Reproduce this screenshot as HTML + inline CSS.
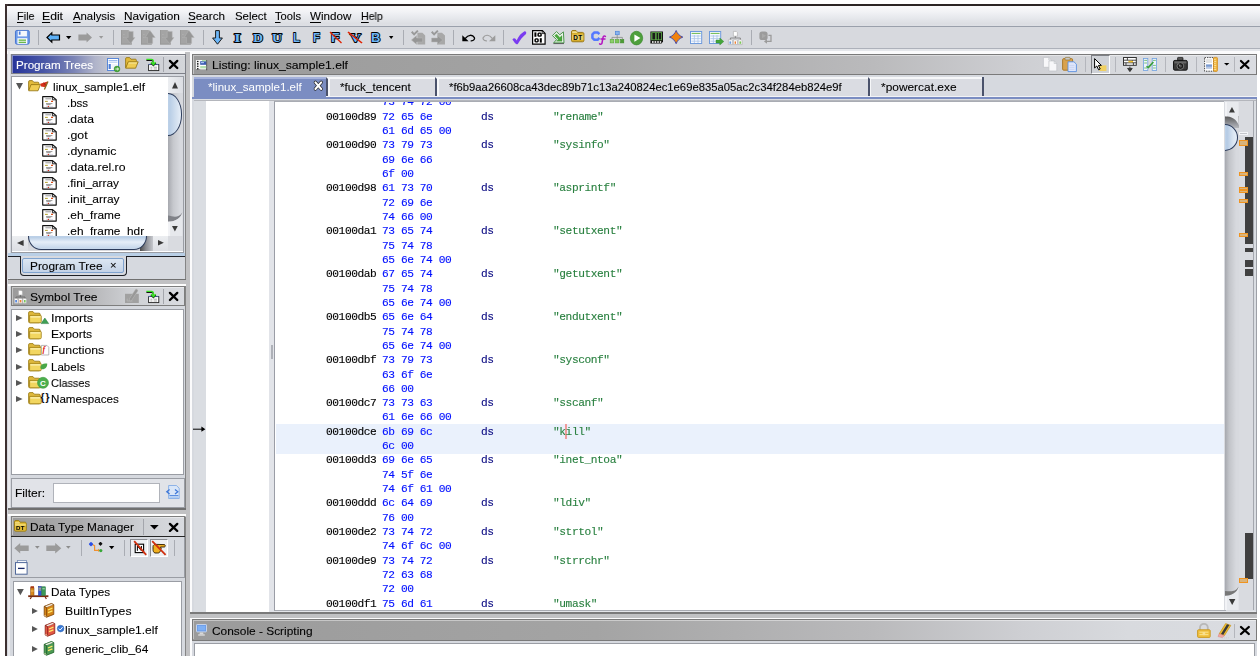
<!DOCTYPE html>
<html><head><meta charset="utf-8">
<style>
*{box-sizing:border-box;margin:0;padding:0}
html,body{width:1260px;height:656px;overflow:hidden;background:#fff}
body{position:relative;font-family:"Liberation Sans",sans-serif;font-size:11px;color:#000}
.t,.m,i,svg{position:absolute;display:block}
.t{white-space:nowrap;line-height:14px;height:14px;transform-origin:0 50%;font-style:normal}
.m{font-family:"Liberation Mono",monospace;font-size:11.2px;letter-spacing:-.421px;line-height:14px;height:14px;white-space:pre}
.a{color:#000}.b{color:#0010ff}.d{color:#0a0a82}.s{color:#2a8040}
u{text-decoration:underline;text-underline-offset:1.5px;text-decoration-thickness:1px}
svg{overflow:visible}
.t,.m{will-change:transform}
.m{-webkit-text-stroke:.13px currentColor}
.t{-webkit-text-stroke:.1px currentColor}
</style></head><body>
<i style="left:5px;top:4px;width:1255px;height:2px;background:#2b2424;"></i>
<i style="left:5px;top:4px;width:3.1px;height:652px;background:#3c3030;"></i>
<i style="left:7px;top:6px;width:1253px;height:650px;background:#d6d9df;"></i>
<i style="left:7px;top:6px;width:1253px;height:20px;background:linear-gradient(#fafafb,#f1f2f5 30%,#e6e8ec 60%,#dcdee3 88%,#dddfe4);"></i>
<i style="left:7px;top:26px;width:1253px;height:1px;background:#9aa0ab;"></i>
<i style="left:7px;top:27px;width:1253px;height:21px;background:#d7d9de;"></i>
<i style="left:7px;top:48px;width:1253px;height:1px;background:#adb1ba;"></i>
<i style="left:7px;top:49px;width:1253px;height:2.4px;background:#e4e6ea;"></i>
<i style="left:7px;top:51.4px;width:1250px;height:2.8px;background:#fbfbfc;"></i>
<span class="t" style="left:16.80px;top:9.00px;font-size:11px;color:#000;transform:scaleX(0.9874);"><u>F</u>ile</span>
<span class="t" style="left:42.30px;top:9.00px;font-size:11px;color:#000;transform:scaleX(1.1079);"><u>E</u>dit</span>
<span class="t" style="left:72.60px;top:9.00px;font-size:11px;color:#000;transform:scaleX(1.0303);"><u>A</u>nalysis</span>
<span class="t" style="left:123.50px;top:9.00px;font-size:11px;color:#000;transform:scaleX(1.0736);"><u>N</u>avigation</span>
<span class="t" style="left:188.30px;top:9.00px;font-size:11px;color:#000;transform:scaleX(1.0616);"><u>S</u>earch</span>
<span class="t" style="left:234.60px;top:9.00px;font-size:11px;color:#000;transform:scaleX(1.0369);">Se<u>l</u>ect</span>
<span class="t" style="left:275.30px;top:9.00px;font-size:11px;color:#000;transform:scaleX(1.0125);"><u>T</u>ools</span>
<span class="t" style="left:310.00px;top:9.00px;font-size:11px;color:#000;transform:scaleX(1.0557);"><u>W</u>indow</span>
<span class="t" style="left:361.00px;top:9.00px;font-size:11px;color:#000;transform:scaleX(0.9637);"><u>H</u>elp</span>
<svg style="left:15.10px;top:30.20px" width="14.70" height="14.60" viewBox="0 0 16 16" preserveAspectRatio="none" ><rect x=".5" y=".5" width="15" height="15" rx="1.5" fill="#6f9cea" stroke="#4070cc"/>
<rect x="3" y="1" width="10" height="6" fill="#f4f7fc"/><rect x="4.2" y="1.6" width="1.8" height="3.6" fill="#4a7ad8"/>
<rect x="2.6" y="9" width="10.8" height="6.2" fill="#fbfcfe"/><rect x="4" y="10.4" width="8" height="1.5" fill="#6cb84a"/><rect x="4" y="12.8" width="8" height="1.5" fill="#6cb84a"/></svg>
<i style="left:37.9px;top:30px;width:1px;height:15px;background:#a9acb3;"></i>
<svg style="left:45.90px;top:32.00px" width="14.20" height="11.00" viewBox="0 0 14.2 11" preserveAspectRatio="none" ><path d="M1 5.5L5.8 .9V3H13.5V8H5.8V10.1Z" fill="#5db0f6" stroke="#000" stroke-width="1.2" stroke-linejoin="miter"/></svg>
<svg style="left:65.90px;top:36.00px" width="5.40" height="3.20" viewBox="0 0 10 6" preserveAspectRatio="none" ><path d="M0 0H10L5 6Z" fill="#000"/></svg>
<svg style="left:77.80px;top:32.00px" width="14.20" height="11.00" viewBox="0 0 14.2 11" preserveAspectRatio="none" ><path d="M14 5.5L8.6 .4V2.6H.4V8.4H8.6V10.6Z" fill="#9b9b9b"/></svg>
<svg style="left:98.80px;top:36.00px" width="4.30" height="2.80" viewBox="0 0 10 6" preserveAspectRatio="none" ><path d="M0 0H10L5 6Z" fill="#9a9a9a"/></svg>
<i style="left:112.9px;top:30px;width:1px;height:15px;background:#a9acb3;"></i>
<svg style="left:120.90px;top:30.20px" width="14.60" height="14.60" viewBox="0 0 14.6 14.6" preserveAspectRatio="none" ><path d="M0 0H7.4L10.8 3V14.6H0Z" fill="#a4a4a4"/><path d="M0 0H.9V14.6H0ZM0 13.6H10.8V14.6H0Z" fill="#999"/><path d="M2 4.6H4M2 7.4H4" stroke="#b4b4b4" stroke-width=".7" stroke-dasharray=".8 .6"/><path d="M7.2 1.4H12.2V7.6H13.9L9.6 13.5L4.6 7.6H7.2Z" fill="#979797" stroke="#b6b6b6" stroke-width=".5"/></svg>
<svg style="left:140.90px;top:30.20px" width="14.60" height="14.60" viewBox="0 0 14.6 14.6" preserveAspectRatio="none" ><path d="M0 0H7.4L10.8 3V14.6H0Z" fill="#a4a4a4"/><path d="M0 0H.9V14.6H0ZM0 13.6H10.8V14.6H0Z" fill="#999"/><path d="M2 4.6H4M2 7.4H4" stroke="#b4b4b4" stroke-width=".7" stroke-dasharray=".8 .6"/><path d="M8.8 .3L14.2 7.4H11.6V13.4H6.6V7.4H4.2Z" fill="#979797" stroke="#b6b6b6" stroke-width=".5"/></svg>
<svg style="left:160.00px;top:30.20px" width="14.60" height="14.60" viewBox="0 0 14.6 14.6" preserveAspectRatio="none" ><path d="M0 0H7.4L10.8 3V14.6H0Z" fill="#a4a4a4"/><path d="M0 0H.9V14.6H0ZM0 13.6H10.8V14.6H0Z" fill="#999"/><path d="M2 4.6H4M2 7.4H4" stroke="#b4b4b4" stroke-width=".7" stroke-dasharray=".8 .6"/><path d="M7.2 1.4H12.2V7.6H13.9L9.6 13.5L4.6 7.6H7.2Z" fill="#979797" stroke="#b6b6b6" stroke-width=".5"/></svg>
<svg style="left:180.00px;top:30.20px" width="14.60" height="14.60" viewBox="0 0 14.6 14.6" preserveAspectRatio="none" ><path d="M0 0H7.4L10.8 3V14.6H0Z" fill="#a4a4a4"/><path d="M0 0H.9V14.6H0ZM0 13.6H10.8V14.6H0Z" fill="#999"/><path d="M2 4.6H4M2 7.4H4" stroke="#b4b4b4" stroke-width=".7" stroke-dasharray=".8 .6"/><path d="M8.8 .3L14.2 7.4H11.6V13.4H6.6V7.4H4.2Z" fill="#979797" stroke="#b6b6b6" stroke-width=".5"/></svg>
<i style="left:202.9px;top:30px;width:1px;height:15px;background:#a9acb3;"></i>
<svg style="left:212.00px;top:30.20px" width="11.00" height="14.80" viewBox="0 0 11 14.8" preserveAspectRatio="none" ><path d="M3.6 .6H7.4V8H10.4L5.5 14.2L.6 8H3.6Z" fill="#6cb6f8" stroke="#1a1a1a" stroke-width="1"/></svg>
<svg style="left:233.00px;top:31.20px" width="8.80" height="12.40" viewBox="0 0 8.8 12.4" preserveAspectRatio="none" ><text x="4.4" y="10.9" text-anchor="middle" font-family="Liberation Serif" font-weight="bold" font-size="13.5" fill="#6cb6f8" stroke="#000" stroke-width="1.8" stroke-linejoin="round" paint-order="stroke" textLength="6.800000000000001" lengthAdjust="spacingAndGlyphs">I</text></svg>
<svg style="left:251.50px;top:31.20px" width="12.00" height="12.40" viewBox="0 0 12 12.4" preserveAspectRatio="none" ><text x="6.0" y="10.9" text-anchor="middle" font-family="Liberation Serif" font-weight="bold" font-size="13.5" fill="#6cb6f8" stroke="#000" stroke-width="1.8" stroke-linejoin="round" paint-order="stroke" textLength="10" lengthAdjust="spacingAndGlyphs">D</text></svg>
<svg style="left:270.60px;top:31.20px" width="12.00" height="12.40" viewBox="0 0 12 12.4" preserveAspectRatio="none" ><text x="6.0" y="10.9" text-anchor="middle" font-family="Liberation Serif" font-weight="bold" font-size="13.5" fill="#6cb6f8" stroke="#000" stroke-width="1.8" stroke-linejoin="round" paint-order="stroke" textLength="10" lengthAdjust="spacingAndGlyphs">U</text></svg>
<svg style="left:292.20px;top:31.20px" width="9.00" height="12.40" viewBox="0 0 9 12.4" preserveAspectRatio="none" ><text x="4.5" y="10.9" text-anchor="middle" font-family="Liberation Sans" font-weight="bold" font-size="13.5" fill="#6cb6f8" stroke="#000" stroke-width="1.8" stroke-linejoin="round" paint-order="stroke" textLength="7" lengthAdjust="spacingAndGlyphs">L</text></svg>
<svg style="left:312.00px;top:31.20px" width="9.00" height="12.40" viewBox="0 0 9 12.4" preserveAspectRatio="none" ><text x="4.5" y="10.9" text-anchor="middle" font-family="Liberation Sans" font-weight="bold" font-size="13.5" fill="#6cb6f8" stroke="#000" stroke-width="1.8" stroke-linejoin="round" paint-order="stroke" textLength="7" lengthAdjust="spacingAndGlyphs">F</text></svg>
<svg style="left:330.40px;top:31.20px" width="10.50" height="12.40" viewBox="0 0 10.5 12.4" preserveAspectRatio="none" ><text x="5.25" y="10.9" text-anchor="middle" font-family="Liberation Sans" font-weight="bold" font-size="13.5" fill="#6cb6f8" stroke="#000" stroke-width="1.8" stroke-linejoin="round" paint-order="stroke" textLength="8.5" lengthAdjust="spacingAndGlyphs">F</text></svg>
<svg style="left:329.90px;top:32.00px" width="11.50" height="11.00" viewBox="0 0 10 10" preserveAspectRatio="none" ><path d="M0 0L10 10" stroke="#e02000" stroke-width="1.1"/></svg>
<svg style="left:348.60px;top:31.20px" width="13.00" height="12.40" viewBox="0 0 13 12.4" preserveAspectRatio="none" ><text x="6.5" y="10.9" text-anchor="middle" font-family="Liberation Serif" font-weight="bold" font-size="13.5" fill="#6cb6f8" stroke="#000" stroke-width="1.8" stroke-linejoin="round" paint-order="stroke" textLength="11" lengthAdjust="spacingAndGlyphs">V</text></svg>
<svg style="left:348.10px;top:32.00px" width="14.00" height="11.00" viewBox="0 0 10 10" preserveAspectRatio="none" ><path d="M0 0L10 10" stroke="#e02000" stroke-width="1.1"/></svg>
<svg style="left:370.40px;top:31.20px" width="11.40" height="12.40" viewBox="0 0 11.4 12.4" preserveAspectRatio="none" ><text x="5.7" y="10.9" text-anchor="middle" font-family="Liberation Sans" font-weight="bold" font-size="13.5" fill="#6cb6f8" stroke="#000" stroke-width="1.8" stroke-linejoin="round" paint-order="stroke" textLength="9.4" lengthAdjust="spacingAndGlyphs">B</text></svg>
<svg style="left:388.75px;top:36.00px" width="4.40" height="3.00" viewBox="0 0 10 6" preserveAspectRatio="none" ><path d="M0 0H10L5 6Z" fill="#000"/></svg>
<i style="left:403.0px;top:30px;width:1px;height:15px;background:#a9acb3;"></i>
<svg style="left:411.25px;top:30.20px" width="14.20" height="14.60" viewBox="0 0 14.2 14.6" preserveAspectRatio="none" ><path d="M6.4 2.8H11.4L14.2 5.4V14.6H6.4Z" fill="#a8a8a8"/><path d="M0 2.4L1.5 1L3.1 3L6.2 0L7.6 1.2L3.1 5.8Z" fill="#999"/><path d="M.4 10L5.6 5.6V8H11.6V12H5.6V14.4Z" fill="#969696" stroke="#b8b8b8" stroke-width=".5"/></svg>
<svg style="left:431.25px;top:30.20px" width="14.20" height="14.60" viewBox="0 0 14.2 14.6" preserveAspectRatio="none" ><path d="M6.4 2.8H11L14 5.6V14.6H6.4Z" fill="#a8a8a8"/><path d="M0 2.4L1.5 1L3.1 3L6.2 0L7.6 1.2L3.1 5.8Z" fill="#999"/><path d="M.6 8H6.6V5.6L11.8 10L6.6 14.4V12H.6Z" fill="#969696" stroke="#b8b8b8" stroke-width=".5"/></svg>
<i style="left:452.8px;top:30px;width:1px;height:15px;background:#a9acb3;"></i>
<svg style="left:461.70px;top:33.50px" width="13.60" height="7.80" viewBox="0 0 13.6 7.8" preserveAspectRatio="none" ><path d="M.3 1.2V7.2H6.6Z" fill="#000"/><path d="M3.6 4.2C6 .6 10.5 .2 12.4 3.6C13 5 12 6.6 9.2 6.9" fill="none" stroke="#000" stroke-width="1.3" stroke-linecap="round"/></svg>
<svg style="left:481.70px;top:33.50px" width="13.60" height="7.80" viewBox="0 0 13.6 7.8" preserveAspectRatio="none" ><path d="M13.3 1.2V7.2H7Z" fill="#9c9c9c"/><path d="M10 4.2C7.6 .6 3.1 .2 1.2 3.6C.6 5 1.6 6.6 4.4 6.9" fill="none" stroke="#9c9c9c" stroke-width="1.2" stroke-linecap="round"/></svg>
<i style="left:503.1px;top:30px;width:1px;height:15px;background:#a9acb3;"></i>
<svg style="left:511.70px;top:30.60px" width="14.60" height="13.40" viewBox="0 0 14.6 13.4" preserveAspectRatio="none" ><path d="M.4 8.4C1.8 6.6 3.4 7 4.6 9.4C6.6 5 9.4 1.8 12.2 .4C13.8 0 14.8 1.4 14 3C10.6 5.8 8 9.2 5.8 13C4.6 13.6 3.6 13.2 .4 8.4Z" fill="#7a3cf0"/></svg>
<svg style="left:532.00px;top:30.20px" width="13.70" height="14.80" viewBox="0 0 13.7 14.8" preserveAspectRatio="none" ><path d="M.6 .6H10.4L13.1 3.4V14.2H.6Z" fill="#fff" stroke="#000" stroke-width="1.2"/><path d="M10.2 .8V3.6H13" fill="none" stroke="#000" stroke-width=".8"/><g fill="#000"><rect x="2.4" y="2.4" width="2" height="4.4"/><rect x="5.4" y="2.4" width="4.4" height="4.4" rx="1.5"/><rect x="2.4" y="8.2" width="4.4" height="4.4" rx="1.5"/><rect x="7.8" y="8.2" width="2" height="4.4"/></g><rect x="6.9" y="3.8" width="1.4" height="1.6" fill="#fff"/><rect x="3.9" y="9.6" width="1.4" height="1.6" fill="#fff"/></svg>
<svg style="left:551.70px;top:31.00px" width="12.60" height="13.20" viewBox="0 0 12.6 13.2" preserveAspectRatio="none" ><path d="M.5 4.6L4.5 .6L7.8 3.8L11.4 .9L12 11.9H1.7L4.6 8.6Z" fill="#eff5ef" stroke="#3c8c3c" stroke-width=".9" stroke-linejoin="round"/><path d="M2.6 4.8L4.5 2.9L7.8 6.4L10 4.6V10.2H4.4L6.2 8.4Z" fill="#48a83c" stroke="#358a2c" stroke-width=".3"/><path d="M1.4 12.6H12" stroke="#444" stroke-width=".8"/></svg>
<svg style="left:570.80px;top:30.20px" width="13.40" height="12.20" viewBox="0 0 13.4 12.2" preserveAspectRatio="none" ><path d="M.5 2C.5 1 1 .5 2 .5H5L6.6 2.4H11.4C12.4 2.4 12.9 3 12.9 4V10.6C12.9 11.4 12.4 11.8 11.6 11.8H1.8C1 11.8 .5 11.4 .5 10.6Z" fill="#d6ac2a" stroke="#94720e" stroke-width=".9"/><path d="M1.2 1.4H5.4L6.4 2.8H1.2Z" fill="#f8eeb0"/><path d="M1 4.6H12.4V10H1Z" fill="#e6cc62"/><text x="2.2" y="10.4" font-family="Liberation Sans" font-weight="bold" font-size="6.4" fill="#000" textLength="9">DT</text></svg>
<svg style="left:590.80px;top:31.00px" width="9.40" height="10.20" viewBox="0 0 9.4 10.2" preserveAspectRatio="none" ><path d="M8.4 3.2L6.6 1.4H3.4L1.4 3.4V6.8L3.4 8.8H6.6L8.4 7" fill="none" stroke="#5578ff" stroke-width="2.5" stroke-linejoin="round"/></svg>
<svg style="left:598.60px;top:35.40px" width="6.80" height="9.80" viewBox="0 0 6.8 9.8" preserveAspectRatio="none" ><path d="M6.4 1.4C5.2 .6 4.2 1.2 4 2.6L3 8C2.8 9.2 1.8 9.6 .6 8.8M2 4H6" fill="none" stroke="#b414c0" stroke-width="1.5" stroke-linecap="round"/></svg>
<svg style="left:609.80px;top:31.00px" width="14.20" height="12.20" viewBox="0 0 14.2 12.2" preserveAspectRatio="none" ><rect x="5.4" y=".3" width="3.8" height="3.4" fill="#8ab4ee" stroke="#4f86d9" stroke-width=".7"/><path d="M7.2 4V6.4M2 8.6V6.4H12.4V8.6M7.2 6.4V8.6" stroke="#8c8c8c" stroke-width=".8" fill="none"/><rect x=".2" y="8.6" width="3.6" height="3.3" fill="#8cd06a" stroke="#58a838" stroke-width=".6"/><rect x="5.4" y="8.6" width="3.6" height="3.3" fill="#7cc658" stroke="#58a838" stroke-width=".6"/><rect x="10.6" y="8.6" width="3.2" height="3.3" fill="#4c9c34" stroke="#3f8a2c" stroke-width=".6"/></svg>
<svg style="left:630.40px;top:30.60px" width="13.00" height="14.20" viewBox="0 0 13 14.2" preserveAspectRatio="none" ><ellipse cx="6.5" cy="7.1" rx="6.2" ry="6.8" fill="#4e9f3d" stroke="#3b8a2f" stroke-width=".7"/><path d="M4.4 3.4L10.4 7.1L4.4 10.8Z" fill="#fff"/></svg>
<svg style="left:650.00px;top:31.00px" width="13.40" height="13.00" viewBox="0 0 13.4 13" preserveAspectRatio="none" ><path d="M.4 .4H13V10.6L11.6 12.6H.4Z" fill="#111"/><rect x="1.2" y="1.2" width="10.8" height="8" fill="#5fae4a"/><rect x="2.4" y="2" width="2.8" height="6.4" fill="#1a1a1a"/><rect x="6.6" y="2" width="1.4" height="6.4" fill="#1a1a1a"/><rect x="8.8" y="2" width="2.4" height="6.4" fill="#1a1a1a"/><g fill="#fff"><rect x="2" y="10.2" width="1.6" height="1.6"/><rect x="4.6" y="10.2" width="1.6" height="1.6"/><rect x="7.2" y="10.2" width="1.6" height="1.6"/><rect x="9.8" y="10.2" width="1.4" height="1.6"/></g></svg>
<svg style="left:668.75px;top:30.00px" width="14.30" height="14.20" viewBox="0 0 14.3 14.2" preserveAspectRatio="none" ><path d="M7.15 .5C8.4 3.6 10.4 5.8 13.8 7.1C10.4 8.4 8.4 10.6 7.15 13.7C5.9 10.6 3.9 8.4 .5 7.1C3.9 5.8 5.9 3.6 7.15 .5Z" fill="#f0820f" stroke="#2434b0" stroke-width=".8"/><path d="M7.15 3L10.8 7.1L7.15 11.2L3.5 7.1Z" fill="#f0820f"/></svg>
<svg style="left:690.00px;top:31.00px" width="12.20" height="13.00" viewBox="0 0 12.2 13" preserveAspectRatio="none" ><rect x=".5" y=".5" width="11.2" height="12" fill="#f6f9fe" stroke="#6f9bdc" stroke-width="1"/><path d="M1.6 2.4H10.6" stroke="#6cb84a" stroke-width="1"/><path d="M1.4 5H10.8M1.4 7.6H10.8M1.4 10.2H10.8M4.4 4V12M8 4V12" stroke="#a9c4ea" stroke-width=".8"/></svg>
<svg style="left:709.00px;top:31.00px" width="12.20" height="13.00" viewBox="0 0 12.2 13" preserveAspectRatio="none" ><rect x=".5" y=".5" width="11.2" height="12" fill="#f6f9fe" stroke="#6f9bdc" stroke-width="1"/><path d="M1.6 2.4H10.6" stroke="#6cb84a" stroke-width="1"/><path d="M1.4 5H10.8M1.4 7.6H10.8M1.4 10.2H10.8M4.4 4V12M8 4V12" stroke="#a9c4ea" stroke-width=".8"/></svg>
<svg style="left:715.50px;top:37.60px" width="7.80" height="7.00" viewBox="0 0 9 8" preserveAspectRatio="none" ><path d="M0 2.4H4.4V0L9 4L4.4 8V5.6H0Z" fill="#45a53a" stroke="#2f8a2a" stroke-width=".5"/></svg>
<svg style="left:728.00px;top:30.60px" width="14.50" height="14.00" viewBox="0 0 14.5 14" preserveAspectRatio="none" ><path d="M5.4 .4H8.2L9.4 1.6V5.2H5.4Z" fill="#fff" stroke="#a8a8a8" stroke-width=".6"/><path d="M7.4 5.2V7M2.4 9V7H12.4V9" fill="none" stroke="#777" stroke-width=".8"/><g fill="#fff" stroke="#a8a8a8" stroke-width=".6"><path d="M.4 8.8H3.6L4.6 9.8V13.6H.4Z"/><path d="M5.4 8.8H8.4L9.4 9.8V13.6H5.4Z"/><path d="M10.2 8.8H13.2L14.2 9.8V13.6H10.2Z"/></g><rect x="1.4" y="10.4" width="1.8" height="2.4" fill="#6a9ae0"/><rect x="6.6" y="10.4" width="1.4" height="2.4" fill="#f08030"/><rect x="11.4" y="10.4" width="1.8" height="2.4" fill="#7cc658"/></svg>
<i style="left:750.8px;top:30px;width:1px;height:15px;background:#a9acb3;"></i>
<svg style="left:759.00px;top:31.00px" width="12.70" height="13.00" viewBox="0 0 12.7 13" preserveAspectRatio="none" ><rect x=".4" y=".4" width="8.2" height="8.6" rx="2.6" fill="#9b9b9b"/><path d="M3 2.4L7 4.8L3 7.2Z" fill="#a9a9a9"/><path d="M9.4 4.4H12V10.4H7.4" fill="none" stroke="#9b9b9b" stroke-width="1.3"/><path d="M5 10.4L8 8V12.8Z" fill="#9b9b9b"/></svg>
<i style="left:7.8px;top:51px;width:2.6px;height:605px;background:#e9eaed;"></i>
<i style="left:185.2px;top:51.7px;width:4.6px;height:604.3px;background:#c1c1c3;"></i>
<i style="left:189.9px;top:51.5px;width:2.3px;height:604.5px;background:#fbfbfc;"></i>
<i style="left:184.6px;top:54.1px;width:1.1px;height:225.6px;background:#858585;"></i>
<i style="left:184.6px;top:286px;width:1.1px;height:223.4px;background:#858585;"></i>
<i style="left:184.6px;top:516.6px;width:1.1px;height:140px;background:#858585;"></i>
<i style="left:11px;top:54.1px;width:174.6px;height:20.4px;background:linear-gradient(90deg,#26349a 0%,#4856a6 18%,#7c85b6 36%,#b0b4ca 48%,#c8cad2 58%,#d4d6da 100%);border:1px solid #7e8088"></i>
<i style="left:12px;top:55.1px;width:172.6px;height:1.1px;background:rgba(255,255,255,.42);"></i>
<i style="left:12px;top:56.2px;width:1.1px;height:17.299999999999997px;background:rgba(255,255,255,.42);"></i>
<span class="t" style="left:15.60px;top:58.00px;font-size:11.5px;color:#fff;transform:scaleX(1.0125);">Program Trees</span>
<i style="left:11px;top:76px;width:173px;height:176.5px;background:#fff;border:1px solid #9a9da4"></i>
<svg style="left:107.10px;top:58.00px" width="13.00" height="14.00" viewBox="0 0 13 14" preserveAspectRatio="none" ><rect x=".5" y=".5" width="11" height="12" fill="#fff" stroke="#5a88d8" stroke-width="1"/>
<rect x="1.6" y="2" width="8.8" height="1.3" fill="#9dbcee"/><rect x="1.6" y="4" width="8.8" height="1" fill="#c6d8f4"/>
<rect x="1.6" y="6" width="2.2" height="5" fill="#4f7fd6"/><rect x="4.4" y="6" width="6" height="5" fill="#eef3fb"/>
<circle cx="10" cy="11" r="2.9" fill="#4aa83a" stroke="#2f8a2a" stroke-width=".5"/><path d="M8.4 11H11.4M10.2 9.8L11.5 11L10.2 12.2" stroke="#fff" stroke-width=".9" fill="none"/></svg>
<svg style="left:125.40px;top:57.20px" width="13.60" height="12.00" viewBox="0 0 13.6 12" preserveAspectRatio="none" ><path d="M.6 10.8V1.8C.6 1 1 .6 1.8 .6H4.6L6 2.2H10.4C11 2.2 11.4 2.6 11.4 3.4V4.6" fill="#e2ba3a" stroke="#8e6e0e" stroke-width=".8"/>
<path d="M.7 11.2L3.2 4.8H13.2L10.6 11.2Z" fill="#efcc52" stroke="#8e6e0e" stroke-width=".8" stroke-linejoin="round"/>
<path d="M3.8 5.6H12L11.6 6.6H3.4Z" fill="#faeaa0"/></svg>
<svg style="left:145.70px;top:58.00px" width="13.40" height="13.00" viewBox="0 0 13.4 13" preserveAspectRatio="none" ><rect x="2.6" y="6.6" width="10.2" height="6" fill="#fff" stroke="#222" stroke-width=".9"/>
<path d="M2.6 6.4H12.8" stroke="#5a7ee0" stroke-width=".9" stroke-dasharray="1.2 .8"/>
<path d="M4.4 9.2H6.4M7.6 9.2H11M4.4 11H6.4M7.6 11H11" stroke="#888" stroke-width=".7"/>
<path d="M.4 2.4H5.4C6.8 2.4 7.4 3 7.4 4.4V6M5 5L7.4 7.6L9.8 5" fill="none" stroke="#111" stroke-width="1.3"/>
<path d="M.4 1.4H5.4C7 1.4 7.4 2.2 7.4 3.6V5.4M5.2 4.2L7.4 6.6L9.6 4.2" fill="none" stroke="#35e020" stroke-width="1.4"/></svg>
<i style="left:163.0px;top:56.6px;width:1px;height:15.8px;background:#a4a6ac;"></i>
<svg style="left:169.00px;top:60.20px" width="9.20" height="8.90" viewBox="0 0 10 10" preserveAspectRatio="none" ><path d="M1 1L9 9M9 1L1 9" stroke="#000" stroke-width="2.5" stroke-linecap="round" fill="none"/></svg>
<div style="position:absolute;left:12px;top:77px;width:156.3px;height:159px;overflow:hidden">
<svg style="left:4.00px;top:6.00px" width="7.00" height="6.40" viewBox="0 0 10 6" preserveAspectRatio="none" ><path d="M0 0H10L5 6Z" fill="#575757"/></svg>
<svg style="left:16.00px;top:3.00px" width="21.00" height="11.40" viewBox="0 0 21 11.4" preserveAspectRatio="none" ><path d="M.6 10.2V1.8C.6 1 1 .6 1.8 .6H4.4L5.8 2.2H9.8C10.6 2.2 11 2.6 11 3.4V4.4" fill="#e2ba3a" stroke="#8e6e0e" stroke-width=".8"/>
<path d="M.7 10.8L3 4.6H12.4L10 10.8Z" fill="#efcc52" stroke="#8e6e0e" stroke-width=".8" stroke-linejoin="round"/>
<path d="M12.2 3.8L19.6 1.4L17.6 7.2L13 6.6Z" fill="#d8301a"/><path d="M15.6 2.6L17.8 5.6" stroke="#8a1a10" stroke-width=".8"/><path d="M20 1.6L16.4 9.6" stroke="#8a6a20" stroke-width="1.3"/></svg>
<svg style="left:30.00px;top:19.00px" width="15.00" height="12.80" viewBox="0 0 15 12.8" preserveAspectRatio="none" ><path d="M.7 .7H10.6L14.2 3.6V12.1H.7Z" fill="#fff" stroke="#111" stroke-width="1.15" stroke-linejoin="round"/>
<path d="M10.4 .8V3.8H14" fill="none" stroke="#111" stroke-width=".9"/>
<path d="M3.4 2.8H9" stroke="#999" stroke-width="1"/>
<path d="M3 5.4H5.8" stroke="#b8a83a" stroke-width="1.1"/><path d="M9 5.4H11" stroke="#d8501c" stroke-width="1.2"/>
<path d="M4 7.6H10.4M4.4 8.6H8.6" stroke="#999" stroke-width="1"/>
<path d="M4 10.4H11" stroke="#cfcfe0" stroke-width=".7"/><circle cx="6.4" cy="10.4" r=".7" fill="#d83018"/></svg>
<svg style="left:30.00px;top:35.10px" width="15.00" height="12.80" viewBox="0 0 15 12.8" preserveAspectRatio="none" ><path d="M.7 .7H10.6L14.2 3.6V12.1H.7Z" fill="#fff" stroke="#111" stroke-width="1.15" stroke-linejoin="round"/>
<path d="M10.4 .8V3.8H14" fill="none" stroke="#111" stroke-width=".9"/>
<path d="M3.4 2.8H9" stroke="#999" stroke-width="1"/>
<path d="M3 5.4H5.8" stroke="#b8a83a" stroke-width="1.1"/><path d="M9 5.4H11" stroke="#d8501c" stroke-width="1.2"/>
<path d="M4 7.6H10.4M4.4 8.6H8.6" stroke="#999" stroke-width="1"/>
<path d="M4 10.4H11" stroke="#cfcfe0" stroke-width=".7"/><circle cx="6.4" cy="10.4" r=".7" fill="#d83018"/></svg>
<svg style="left:30.00px;top:51.20px" width="15.00" height="12.80" viewBox="0 0 15 12.8" preserveAspectRatio="none" ><path d="M.7 .7H10.6L14.2 3.6V12.1H.7Z" fill="#fff" stroke="#111" stroke-width="1.15" stroke-linejoin="round"/>
<path d="M10.4 .8V3.8H14" fill="none" stroke="#111" stroke-width=".9"/>
<path d="M3.4 2.8H9" stroke="#999" stroke-width="1"/>
<path d="M3 5.4H5.8" stroke="#b8a83a" stroke-width="1.1"/><path d="M9 5.4H11" stroke="#d8501c" stroke-width="1.2"/>
<path d="M4 7.6H10.4M4.4 8.6H8.6" stroke="#999" stroke-width="1"/>
<path d="M4 10.4H11" stroke="#cfcfe0" stroke-width=".7"/><circle cx="6.4" cy="10.4" r=".7" fill="#d83018"/></svg>
<svg style="left:30.00px;top:67.30px" width="15.00" height="12.80" viewBox="0 0 15 12.8" preserveAspectRatio="none" ><path d="M.7 .7H10.6L14.2 3.6V12.1H.7Z" fill="#fff" stroke="#111" stroke-width="1.15" stroke-linejoin="round"/>
<path d="M10.4 .8V3.8H14" fill="none" stroke="#111" stroke-width=".9"/>
<path d="M3.4 2.8H9" stroke="#999" stroke-width="1"/>
<path d="M3 5.4H5.8" stroke="#b8a83a" stroke-width="1.1"/><path d="M9 5.4H11" stroke="#d8501c" stroke-width="1.2"/>
<path d="M4 7.6H10.4M4.4 8.6H8.6" stroke="#999" stroke-width="1"/>
<path d="M4 10.4H11" stroke="#cfcfe0" stroke-width=".7"/><circle cx="6.4" cy="10.4" r=".7" fill="#d83018"/></svg>
<svg style="left:30.00px;top:83.40px" width="15.00" height="12.80" viewBox="0 0 15 12.8" preserveAspectRatio="none" ><path d="M.7 .7H10.6L14.2 3.6V12.1H.7Z" fill="#fff" stroke="#111" stroke-width="1.15" stroke-linejoin="round"/>
<path d="M10.4 .8V3.8H14" fill="none" stroke="#111" stroke-width=".9"/>
<path d="M3.4 2.8H9" stroke="#999" stroke-width="1"/>
<path d="M3 5.4H5.8" stroke="#b8a83a" stroke-width="1.1"/><path d="M9 5.4H11" stroke="#d8501c" stroke-width="1.2"/>
<path d="M4 7.6H10.4M4.4 8.6H8.6" stroke="#999" stroke-width="1"/>
<path d="M4 10.4H11" stroke="#cfcfe0" stroke-width=".7"/><circle cx="6.4" cy="10.4" r=".7" fill="#d83018"/></svg>
<svg style="left:30.00px;top:99.50px" width="15.00" height="12.80" viewBox="0 0 15 12.8" preserveAspectRatio="none" ><path d="M.7 .7H10.6L14.2 3.6V12.1H.7Z" fill="#fff" stroke="#111" stroke-width="1.15" stroke-linejoin="round"/>
<path d="M10.4 .8V3.8H14" fill="none" stroke="#111" stroke-width=".9"/>
<path d="M3.4 2.8H9" stroke="#999" stroke-width="1"/>
<path d="M3 5.4H5.8" stroke="#b8a83a" stroke-width="1.1"/><path d="M9 5.4H11" stroke="#d8501c" stroke-width="1.2"/>
<path d="M4 7.6H10.4M4.4 8.6H8.6" stroke="#999" stroke-width="1"/>
<path d="M4 10.4H11" stroke="#cfcfe0" stroke-width=".7"/><circle cx="6.4" cy="10.4" r=".7" fill="#d83018"/></svg>
<svg style="left:30.00px;top:115.60px" width="15.00" height="12.80" viewBox="0 0 15 12.8" preserveAspectRatio="none" ><path d="M.7 .7H10.6L14.2 3.6V12.1H.7Z" fill="#fff" stroke="#111" stroke-width="1.15" stroke-linejoin="round"/>
<path d="M10.4 .8V3.8H14" fill="none" stroke="#111" stroke-width=".9"/>
<path d="M3.4 2.8H9" stroke="#999" stroke-width="1"/>
<path d="M3 5.4H5.8" stroke="#b8a83a" stroke-width="1.1"/><path d="M9 5.4H11" stroke="#d8501c" stroke-width="1.2"/>
<path d="M4 7.6H10.4M4.4 8.6H8.6" stroke="#999" stroke-width="1"/>
<path d="M4 10.4H11" stroke="#cfcfe0" stroke-width=".7"/><circle cx="6.4" cy="10.4" r=".7" fill="#d83018"/></svg>
<svg style="left:30.00px;top:131.70px" width="15.00" height="12.80" viewBox="0 0 15 12.8" preserveAspectRatio="none" ><path d="M.7 .7H10.6L14.2 3.6V12.1H.7Z" fill="#fff" stroke="#111" stroke-width="1.15" stroke-linejoin="round"/>
<path d="M10.4 .8V3.8H14" fill="none" stroke="#111" stroke-width=".9"/>
<path d="M3.4 2.8H9" stroke="#999" stroke-width="1"/>
<path d="M3 5.4H5.8" stroke="#b8a83a" stroke-width="1.1"/><path d="M9 5.4H11" stroke="#d8501c" stroke-width="1.2"/>
<path d="M4 7.6H10.4M4.4 8.6H8.6" stroke="#999" stroke-width="1"/>
<path d="M4 10.4H11" stroke="#cfcfe0" stroke-width=".7"/><circle cx="6.4" cy="10.4" r=".7" fill="#d83018"/></svg>
<svg style="left:30.00px;top:147.80px" width="15.00" height="12.80" viewBox="0 0 15 12.8" preserveAspectRatio="none" ><path d="M.7 .7H10.6L14.2 3.6V12.1H.7Z" fill="#fff" stroke="#111" stroke-width="1.15" stroke-linejoin="round"/>
<path d="M10.4 .8V3.8H14" fill="none" stroke="#111" stroke-width=".9"/>
<path d="M3.4 2.8H9" stroke="#999" stroke-width="1"/>
<path d="M3 5.4H5.8" stroke="#b8a83a" stroke-width="1.1"/><path d="M9 5.4H11" stroke="#d8501c" stroke-width="1.2"/>
<path d="M4 7.6H10.4M4.4 8.6H8.6" stroke="#999" stroke-width="1"/>
<path d="M4 10.4H11" stroke="#cfcfe0" stroke-width=".7"/><circle cx="6.4" cy="10.4" r=".7" fill="#d83018"/></svg>
<span class="t" style="left:41.00px;top:2.50px;font-size:11.3px;color:#000;transform:scaleX(1.0549);">linux_sample1.elf</span>
<span class="t" style="left:55.00px;top:18.50px;font-size:11.3px;color:#000;transform:scaleX(1.0182);">.bss</span>
<span class="t" style="left:55.00px;top:34.60px;font-size:11.3px;color:#000;transform:scaleX(1.0744);">.data</span>
<span class="t" style="left:55.00px;top:50.70px;font-size:11.3px;color:#000;transform:scaleX(1.0930);">.got</span>
<span class="t" style="left:55.00px;top:66.80px;font-size:11.3px;color:#000;transform:scaleX(1.0903);">.dynamic</span>
<span class="t" style="left:55.00px;top:82.90px;font-size:11.3px;color:#000;transform:scaleX(1.0831);">.data.rel.ro</span>
<span class="t" style="left:55.00px;top:99.00px;font-size:11.3px;color:#000;transform:scaleX(1.0481);">.fini_array</span>
<span class="t" style="left:55.00px;top:115.10px;font-size:11.3px;color:#000;transform:scaleX(1.0602);">.init_array</span>
<span class="t" style="left:55.00px;top:131.20px;font-size:11.3px;color:#000;transform:scaleX(1.0516);">.eh_frame</span>
<span class="t" style="left:55.00px;top:147.30px;font-size:11.3px;color:#000;transform:scaleX(1.0491);">.eh_frame_hdr</span>
</div>
<div style="position:absolute;left:168.2px;top:77px;width:14.4px;height:159px;overflow:hidden;background:linear-gradient(90deg,#a7a9af,#c6c8cd 35%,#d7d9de 80%)">
<i style="left:0;top:0;width:14.4px;height:16px;background:linear-gradient(90deg,#eceef1,#dcdee3)"></i>
<i style="left:-16px;top:15.8px;width:30px;height:43px;border-radius:14px/21px;border:1px solid #2c3c5c;background:linear-gradient(90deg,#c0d4ea 50%,#b9cee6 60%,#dbe6f3 90%,#e6eef8)"></i>
<svg style="left:0;top:135px" width="14.4" height="24" viewBox="0 0 13.7 24" preserveAspectRatio="none"><path d="M0 3.6C5 4.6 10 6.4 13.7 .5C12 7 6 9.6 0 9.8Z" fill="#808288"/><path d="M0 24H13.7V.5C12 7 6 9.6 0 9.8Z" fill="#e6e8ec"/><path d="M0 24H2V9.8H0Z" fill="#f2f3f6"/></svg>
</div>
<svg style="left:172.20px;top:82.30px" width="6.00" height="6.60" viewBox="0 0 6 6.6" preserveAspectRatio="none" ><path d="M3 0L6 6.6H0Z" fill="#3a3a3a"/></svg>
<svg style="left:172.40px;top:226.20px" width="5.80" height="5.40" viewBox="0 0 5.8 5.4" preserveAspectRatio="none" ><path d="M0 0H5.8L2.9 5.4Z" fill="#3a3a3a"/></svg>
<div style="position:absolute;left:12px;top:236px;width:156.2px;height:14.5px;overflow:hidden;background:linear-gradient(#a7a9af,#c6c8cd 35%,#d7d9de 80%)">
<i style="left:0;top:0;width:16px;height:14.5px;background:linear-gradient(#eceef1,#dcdee3)"></i>
<i style="left:128px;top:0;width:13px;height:14.5px;background:linear-gradient(90deg,#4a4a4a,#8a8c92 45%,#c6c8cd)"></i>
<i style="left:140.5px;top:0;width:16px;height:14.5px;background:linear-gradient(#eceef1,#dcdee3)"></i>
<i style="left:16px;top:-16px;width:119px;height:30px;border-radius:13px/14px;border:1px solid #2c3c5c;background:linear-gradient(#c0d4ea 50%,#b9cee6 58%,#e6eef8 75%,#c9d9ec 95%)"></i>
</div>
<svg style="left:17.40px;top:240.20px" width="6.60" height="5.90" viewBox="0 0 6.6 5.9" preserveAspectRatio="none" ><path d="M6.6 0V5.9L0 2.95Z" fill="#3a3a3a"/></svg>
<svg style="left:158.00px;top:240.20px" width="5.80" height="5.60" viewBox="0 0 5.8 5.6" preserveAspectRatio="none" ><path d="M0 0V5.6L5.8 2.8Z" fill="#3a3a3a"/></svg>
<i style="left:168.2px;top:236px;width:14.4px;height:14.5px;background:#d9dbe0;"></i>
<i style="left:8px;top:253px;width:177px;height:3px;background:#b9cfe6;"></i>
<i style="left:8px;top:255.8px;width:177px;height:1.3px;background:#1e2026;"></i>
<i style="left:8px;top:257px;width:177px;height:21px;background:#d6d9df;"></i>
<i style="left:19.5px;top:256px;width:107px;height:19.5px;border:1.2px solid #1e2026;border-top:none;border-radius:0 0 4px 4px;background:#d6d9df"></i>
<i style="left:22px;top:257.5px;width:102px;height:15.5px;border:1px solid #7fa3cf;border-radius:2px;background:linear-gradient(#dce6f2,#c4d3e6)"></i>
<span class="t" style="left:29.80px;top:258.50px;font-size:11.5px;color:#000;transform:scaleX(1.0313);">Program Tree</span>
<span class="t" style="left:109.80px;top:258.00px;font-size:11px;color:#000;transform:scaleX(1.0119);">×</span>
<i style="left:8px;top:278.5px;width:177.5px;height:1.4px;background:#707070;"></i>
<i style="left:8px;top:279.9px;width:177.5px;height:3.8px;background:#c1c1c3;"></i>
<i style="left:8px;top:283.7px;width:177.5px;height:2.4px;background:#fdfdfd;"></i>
<i style="left:10.5px;top:285.9px;width:174.5px;height:20.2px;background:linear-gradient(90deg,#9b9b9b 0%,#b0b0b2 40%,#cfd1d5 70%,#d9dbe0 100%);border:1px solid #7e7e7e"></i>
<i style="left:11.5px;top:286.9px;width:172.5px;height:1.1px;background:rgba(255,255,255,.42);"></i>
<i style="left:11.5px;top:288.0px;width:1.1px;height:17.099999999999998px;background:rgba(255,255,255,.42);"></i>
<span class="t" style="left:29.80px;top:290.00px;font-size:11.5px;color:#000;transform:scaleX(1.0457);">Symbol Tree</span>
<i style="left:11px;top:309px;width:173px;height:166px;background:#fff;border:1px solid #9a9da4"></i>
<i style="left:10.5px;top:478px;width:174.5px;height:30px;background:#e1e3e8;border:1px solid #9a9da4"></i>
<span class="t" style="left:14.60px;top:485.50px;font-size:11.5px;color:#000;transform:scaleX(1.0435);">Filter:</span>
<i style="left:53.3px;top:482.5px;width:106.5px;height:20px;background:#fff;border:1px solid #b0b3ba"></i>
<i style="left:8px;top:508.4px;width:177.5px;height:1.4px;background:#707070;"></i>
<i style="left:8px;top:509.8px;width:177.5px;height:4px;background:#c1c1c3;"></i>
<i style="left:8px;top:513.8px;width:177.5px;height:2.6px;background:#fdfdfd;"></i>
<i style="left:10.5px;top:516px;width:174.5px;height:20.5px;background:linear-gradient(90deg,#9b9b9b 0%,#adadaf 40%,#cdcfd3 75%,#d9dbe0 100%);border:1px solid #7e7e7e"></i>
<i style="left:11.5px;top:517px;width:172.5px;height:1.1px;background:rgba(255,255,255,.42);"></i>
<i style="left:11.5px;top:518.1px;width:1.1px;height:17.4px;background:rgba(255,255,255,.42);"></i>
<i style="left:10.5px;top:535.8px;width:174.5px;height:1.6px;background:#262626;"></i>
<span class="t" style="left:30.10px;top:520.00px;font-size:11.5px;color:#000;transform:scaleX(1.0308);">Data Type Manager</span>
<i style="left:143.2px;top:519px;width:1px;height:15.5px;background:#a4a6ac;"></i>
<i style="left:10.5px;top:537px;width:174.5px;height:41px;background:#d6d9df;border:1px solid #9a9da4;border-top:none"></i>
<i style="left:81.2px;top:540px;width:1px;height:16px;background:#a9acb3;"></i>
<i style="left:124.0px;top:540px;width:1px;height:16px;background:#a9acb3;"></i>
<i style="left:174.0px;top:540px;width:1px;height:16px;background:#a9acb3;"></i>
<i style="left:12.5px;top:581px;width:169.5px;height:75px;background:#fff;border:1px solid #9a9da4;border-bottom:none"></i>
<span class="t" style="left:51.20px;top:584.90px;font-size:11.5px;color:#000;transform:scaleX(1.0197);">Data Types</span>
<span class="t" style="left:65.00px;top:603.70px;font-size:11.5px;color:#000;transform:scaleX(1.0616);">BuiltInTypes</span>
<span class="t" style="left:65.00px;top:622.50px;font-size:11.5px;color:#000;transform:scaleX(1.0444);">linux_sample1.elf</span>
<span class="t" style="left:65.00px;top:641.70px;font-size:11.5px;color:#000;transform:scaleX(1.0341);">generic_clib_64</span>
<svg style="left:13.70px;top:289.70px" width="12.60" height="13.50" viewBox="0 0 12.6 13.5" preserveAspectRatio="none" ><path d="M4.6 .4H7.2L8.4 1.6V5H4.6Z" fill="#fff" stroke="#b0b0b0" stroke-width=".6"/><path d="M6.4 5V7M2 8.6V7H11V8.6" fill="none" stroke="#666" stroke-width=".8"/>
<g fill="#fff" stroke="#b0b0b0" stroke-width=".6"><path d="M.4 8.6H3L4 9.6V13.2H.4Z"/><path d="M4.6 8.6H7.4L8.4 9.6V13.2H4.6Z"/><path d="M9 8.6H11.6L12.4 9.6V13.2H9Z"/></g>
<rect x="1.2" y="10" width="1.8" height="2.4" fill="#5a8ae0"/><rect x="5.6" y="10" width="1.8" height="2.4" fill="#f08030"/><rect x="10" y="10" width="1.6" height="2.4" fill="#7cc658"/></svg>
<svg style="left:125.10px;top:289.40px" width="13.80" height="14.00" viewBox="0 0 13.8 14" preserveAspectRatio="none" ><rect x="0" y="4.8" width="13.8" height="9.2" fill="#a1a1a1"/><path d="M2.2 9.6V12H7.6" fill="none" stroke="#b3b3b3" stroke-width="1"/><path d="M11.4 1.6L5.6 10.4" stroke="#b6b6b6" stroke-width="3.4" stroke-linecap="round"/><path d="M11.4 1.6L5.6 10.4" stroke="#989898" stroke-width="2.2" stroke-linecap="round"/></svg>
<svg style="left:145.70px;top:290.00px" width="13.40" height="13.00" viewBox="0 0 13.4 13" preserveAspectRatio="none" ><rect x="2.6" y="6.6" width="10.2" height="6" fill="#fff" stroke="#222" stroke-width=".9"/>
<path d="M2.6 6.4H12.8" stroke="#5a7ee0" stroke-width=".9" stroke-dasharray="1.2 .8"/>
<path d="M4.4 9.2H6.4M7.6 9.2H11M4.4 11H6.4M7.6 11H11" stroke="#888" stroke-width=".7"/>
<path d="M.4 2.4H5.4C6.8 2.4 7.4 3 7.4 4.4V6M5 5L7.4 7.6L9.8 5" fill="none" stroke="#111" stroke-width="1.3"/>
<path d="M.4 1.4H5.4C7 1.4 7.4 2.2 7.4 3.6V5.4M5.2 4.2L7.4 6.6L9.6 4.2" fill="none" stroke="#35e020" stroke-width="1.4"/></svg>
<i style="left:163.0px;top:288.6px;width:1px;height:15.8px;background:#a4a6ac;"></i>
<svg style="left:169.00px;top:292.30px" width="9.20" height="8.90" viewBox="0 0 10 10" preserveAspectRatio="none" ><path d="M1 1L9 9M9 1L1 9" stroke="#000" stroke-width="2.5" stroke-linecap="round" fill="none"/></svg>
<svg style="left:16.00px;top:315.20px" width="6.60" height="6.00" viewBox="0 0 6 10" preserveAspectRatio="none" ><path d="M0 0L6 5L0 10Z" fill="#575757"/></svg>
<svg style="left:27.70px;top:311.00px" width="13.80" height="12.40" viewBox="0 0 13.8 12.4" preserveAspectRatio="none" ><path d="M.6 10.6V1.8C.6 1 1 .6 1.8 .6H5L6.4 2.2H11C11.8 2.2 12.2 2.6 12.2 3.4V10.6C12.2 11.4 11.8 11.8 11 11.8H1.8C1 11.8 .6 11.4 .6 10.6Z" fill="#dfb93c" stroke="#96760f" stroke-width=".8"/>
<path d="M1.6 4.4H12.6C13 4.4 13.3 4.7 13.3 5.1V10.6C13.3 11.4 12.9 11.8 12.1 11.8H2.4C1.8 11.8 1.6 11.4 1.6 10.8Z" fill="#f2d660" stroke="#96760f" stroke-width=".7"/>
<path d="M2.4 5.2H12.4V6.6H2.4Z" fill="#fbefac"/></svg>
<svg style="left:16.00px;top:331.33px" width="6.60" height="6.00" viewBox="0 0 6 10" preserveAspectRatio="none" ><path d="M0 0L6 5L0 10Z" fill="#575757"/></svg>
<svg style="left:27.70px;top:327.13px" width="13.80" height="12.40" viewBox="0 0 13.8 12.4" preserveAspectRatio="none" ><path d="M.6 10.6V1.8C.6 1 1 .6 1.8 .6H5L6.4 2.2H11C11.8 2.2 12.2 2.6 12.2 3.4V10.6C12.2 11.4 11.8 11.8 11 11.8H1.8C1 11.8 .6 11.4 .6 10.6Z" fill="#dfb93c" stroke="#96760f" stroke-width=".8"/>
<path d="M1.6 4.4H12.6C13 4.4 13.3 4.7 13.3 5.1V10.6C13.3 11.4 12.9 11.8 12.1 11.8H2.4C1.8 11.8 1.6 11.4 1.6 10.8Z" fill="#f2d660" stroke="#96760f" stroke-width=".7"/>
<path d="M2.4 5.2H12.4V6.6H2.4Z" fill="#fbefac"/></svg>
<svg style="left:16.00px;top:347.46px" width="6.60" height="6.00" viewBox="0 0 6 10" preserveAspectRatio="none" ><path d="M0 0L6 5L0 10Z" fill="#575757"/></svg>
<svg style="left:27.70px;top:343.26px" width="13.80" height="12.40" viewBox="0 0 13.8 12.4" preserveAspectRatio="none" ><path d="M.6 10.6V1.8C.6 1 1 .6 1.8 .6H5L6.4 2.2H11C11.8 2.2 12.2 2.6 12.2 3.4V10.6C12.2 11.4 11.8 11.8 11 11.8H1.8C1 11.8 .6 11.4 .6 10.6Z" fill="#dfb93c" stroke="#96760f" stroke-width=".8"/>
<path d="M1.6 4.4H12.6C13 4.4 13.3 4.7 13.3 5.1V10.6C13.3 11.4 12.9 11.8 12.1 11.8H2.4C1.8 11.8 1.6 11.4 1.6 10.8Z" fill="#f2d660" stroke="#96760f" stroke-width=".7"/>
<path d="M2.4 5.2H12.4V6.6H2.4Z" fill="#fbefac"/></svg>
<svg style="left:16.00px;top:363.59px" width="6.60" height="6.00" viewBox="0 0 6 10" preserveAspectRatio="none" ><path d="M0 0L6 5L0 10Z" fill="#575757"/></svg>
<svg style="left:27.70px;top:359.39px" width="13.80" height="12.40" viewBox="0 0 13.8 12.4" preserveAspectRatio="none" ><path d="M.6 10.6V1.8C.6 1 1 .6 1.8 .6H5L6.4 2.2H11C11.8 2.2 12.2 2.6 12.2 3.4V10.6C12.2 11.4 11.8 11.8 11 11.8H1.8C1 11.8 .6 11.4 .6 10.6Z" fill="#dfb93c" stroke="#96760f" stroke-width=".8"/>
<path d="M1.6 4.4H12.6C13 4.4 13.3 4.7 13.3 5.1V10.6C13.3 11.4 12.9 11.8 12.1 11.8H2.4C1.8 11.8 1.6 11.4 1.6 10.8Z" fill="#f2d660" stroke="#96760f" stroke-width=".7"/>
<path d="M2.4 5.2H12.4V6.6H2.4Z" fill="#fbefac"/></svg>
<svg style="left:16.00px;top:379.72px" width="6.60" height="6.00" viewBox="0 0 6 10" preserveAspectRatio="none" ><path d="M0 0L6 5L0 10Z" fill="#575757"/></svg>
<svg style="left:27.70px;top:375.52px" width="13.80" height="12.40" viewBox="0 0 13.8 12.4" preserveAspectRatio="none" ><path d="M.6 10.6V1.8C.6 1 1 .6 1.8 .6H5L6.4 2.2H11C11.8 2.2 12.2 2.6 12.2 3.4V10.6C12.2 11.4 11.8 11.8 11 11.8H1.8C1 11.8 .6 11.4 .6 10.6Z" fill="#dfb93c" stroke="#96760f" stroke-width=".8"/>
<path d="M1.6 4.4H12.6C13 4.4 13.3 4.7 13.3 5.1V10.6C13.3 11.4 12.9 11.8 12.1 11.8H2.4C1.8 11.8 1.6 11.4 1.6 10.8Z" fill="#f2d660" stroke="#96760f" stroke-width=".7"/>
<path d="M2.4 5.2H12.4V6.6H2.4Z" fill="#fbefac"/></svg>
<svg style="left:16.00px;top:395.85px" width="6.60" height="6.00" viewBox="0 0 6 10" preserveAspectRatio="none" ><path d="M0 0L6 5L0 10Z" fill="#575757"/></svg>
<svg style="left:27.70px;top:391.65px" width="13.80" height="12.40" viewBox="0 0 13.8 12.4" preserveAspectRatio="none" ><path d="M.6 10.6V1.8C.6 1 1 .6 1.8 .6H5L6.4 2.2H11C11.8 2.2 12.2 2.6 12.2 3.4V10.6C12.2 11.4 11.8 11.8 11 11.8H1.8C1 11.8 .6 11.4 .6 10.6Z" fill="#dfb93c" stroke="#96760f" stroke-width=".8"/>
<path d="M1.6 4.4H12.6C13 4.4 13.3 4.7 13.3 5.1V10.6C13.3 11.4 12.9 11.8 12.1 11.8H2.4C1.8 11.8 1.6 11.4 1.6 10.8Z" fill="#f2d660" stroke="#96760f" stroke-width=".7"/>
<path d="M2.4 5.2H12.4V6.6H2.4Z" fill="#fbefac"/></svg>
<svg style="left:41.00px;top:317.90px" width="7.70" height="5.60" viewBox="0 0 7.7 5.6" preserveAspectRatio="none" ><path d="M3.85 0L7.7 5.6H0Z" fill="#3f9f55" stroke="#2c7a3e" stroke-width=".5"/></svg>
<svg style="left:40.50px;top:345.06px" width="8.20" height="10.40" viewBox="0 0 8.2 10.4" preserveAspectRatio="none" ><path d="M.4 .4H6L7.8 2.2V10H.4Z" fill="#fff" stroke="#999" stroke-width=".7"/><text x="1.6" y="7.4" font-family="Liberation Serif" font-style="italic" font-weight="bold" font-size="8" fill="#e02010">f</text></svg>
<svg style="left:40.00px;top:362.99px" width="7.60" height="6.60" viewBox="0 0 7.6 6.6" preserveAspectRatio="none" ><path d="M.4 4.6C.4 1.6 3 .2 7.2 .4C7.4 3.6 5.6 6.2 2.4 6.2C1.2 6.2 .4 5.6 .4 4.6Z" fill="#4aa848"/></svg>
<svg style="left:37.00px;top:376.92px" width="12.00" height="11.60" viewBox="0 0 12 11.6" preserveAspectRatio="none" ><circle cx="6" cy="5.8" r="5.5" fill="#4cae4c" stroke="#3a9a3a" stroke-width=".6"/><text x="6" y="8.6" text-anchor="middle" font-family="Liberation Sans" font-weight="bold" font-size="8" fill="#fff">C</text></svg>
<span class="t" style="left:40.6px;top:391.25px;font-size:10px;font-weight:bold;color:#111;letter-spacing:.9px;will-change:auto">{}</span>
<span class="t" style="left:51.10px;top:311.20px;font-size:11.3px;color:#000;transform:scaleX(1.1149);">Imports</span>
<span class="t" style="left:51.10px;top:327.33px;font-size:11.3px;color:#000;transform:scaleX(1.0755);">Exports</span>
<span class="t" style="left:51.10px;top:343.46px;font-size:11.3px;color:#000;transform:scaleX(1.0859);">Functions</span>
<span class="t" style="left:51.10px;top:359.59px;font-size:11.3px;color:#000;transform:scaleX(1.0211);">Labels</span>
<span class="t" style="left:51.10px;top:375.72px;font-size:11.3px;color:#000;transform:scaleX(0.9704);">Classes</span>
<span class="t" style="left:51.10px;top:391.85px;font-size:11.3px;color:#000;transform:scaleX(1.0296);">Namespaces</span>
<svg style="left:166.30px;top:485.00px" width="13.70" height="14.00" viewBox="0 0 13.7 14" preserveAspectRatio="none" ><path d="M2.6 .5H10.4L13.2 3.2V13.5H2.6Z" fill="#d9e6f8" stroke="#7aa6e4" stroke-width=".8"/><path d="M3.4 10.6H12.4" stroke="#5a8ee0" stroke-width="1.2"/><path d="M3.4 12.4H12.4" stroke="#9cc0f0" stroke-width=".8"/><path d="M3.6 4.6L.8 6.8L3.6 9M9 4.6L11.8 6.8L9 9" fill="none" stroke="#3f78d8" stroke-width="1.3"/></svg>
<svg style="left:13.70px;top:519.80px" width="12.80" height="11.60" viewBox="0 0 12.8 11.6" preserveAspectRatio="none" ><path d="M.5 2C.5 1 1 .5 2 .5H4.8L6.2 2.2H10.8C11.8 2.2 12.3 2.8 12.3 3.8V10C12.3 10.8 11.8 11.2 11 11.2H1.8C1 11.2 .5 10.8 .5 10Z" fill="#e2bc36" stroke="#9a7a12" stroke-width=".9"/><path d="M1 2.4H5.6V3.4H1Z" fill="#f6e9a6"/><path d="M1 4.2H11.8V5.6H1Z" fill="#f3dd7c"/><text x="2" y="10" font-family="Liberation Sans" font-weight="bold" font-size="6.2" fill="#000" textLength="8.6">DT</text></svg>
<svg style="left:150.00px;top:525.00px" width="8.70" height="4.40" viewBox="0 0 10 6" preserveAspectRatio="none" ><path d="M0 0H10L5 6Z" fill="#000"/></svg>
<svg style="left:168.90px;top:522.60px" width="9.20" height="8.80" viewBox="0 0 10 10" preserveAspectRatio="none" ><path d="M1 1L9 9M9 1L1 9" stroke="#000" stroke-width="2.5" stroke-linecap="round" fill="none"/></svg>
<svg style="left:13.80px;top:542.60px" width="15.00" height="10.40" viewBox="0 0 15 10.4" preserveAspectRatio="none" ><path d="M.3 5.2L6.2 0V2.4H14.7V8H6.2V10.4Z" fill="#9b9b9b"/></svg>
<svg style="left:34.60px;top:546.40px" width="4.60" height="2.80" viewBox="0 0 10 6" preserveAspectRatio="none" ><path d="M0 0H10L5 6Z" fill="#8c8c8c"/></svg>
<svg style="left:45.80px;top:542.60px" width="15.60" height="10.40" viewBox="0 0 15.6 10.4" preserveAspectRatio="none" ><path d="M15.3 5.2L9.2 0V2.4H.3V8H9.2V10.4Z" fill="#9b9b9b"/></svg>
<svg style="left:66.20px;top:546.40px" width="4.60" height="2.80" viewBox="0 0 10 6" preserveAspectRatio="none" ><path d="M0 0H10L5 6Z" fill="#8c8c8c"/></svg>
<svg style="left:88.70px;top:542.40px" width="13.80" height="10.60" viewBox="0 0 13.8 10.6" preserveAspectRatio="none" ><path d="M2.4 2L5.6 3.6V8.4H10" fill="none" stroke="#f09030" stroke-width="1.2"/><path d="M9 6.8L11 8.4L9 10" fill="#f09030"/><rect x=".3" y=".4" width="3.4" height="3.4" rx=".8" fill="#2a50e8" transform="rotate(45 2 2.1)"/><rect x="10" y=".3" width="3" height="3" rx=".6" fill="#111" transform="rotate(45 11.5 1.8)"/><circle cx="11.8" cy="8.6" r="1.6" fill="#38a838"/></svg>
<svg style="left:109.00px;top:546.00px" width="5.30" height="3.20" viewBox="0 0 10 6" preserveAspectRatio="none" ><path d="M0 0H10L5 6Z" fill="#000"/></svg>
<i style="left:129.6px;top:539.2px;width:18.4px;height:18.2px;background:#eef0f3;border-top:1.2px solid #8a8c92;border-left:1.2px solid #8a8c92;border-right:1px solid #fff;border-bottom:1px solid #fff"></i>
<i style="left:149.6px;top:539.2px;width:18.4px;height:18.2px;background:#eef0f3;border-top:1.2px solid #8a8c92;border-left:1.2px solid #8a8c92;border-right:1px solid #fff;border-bottom:1px solid #fff"></i>
<svg style="left:133.50px;top:541.20px" width="12.60" height="14.00" viewBox="0 0 12.6 14" preserveAspectRatio="none" ><rect x="1.2" y="3.2" width="8.4" height="8.4" fill="#fff" stroke="#000" stroke-width="1.1"/><path d="M3.4 9.8V5L7.4 9.8V5" fill="none" stroke="#000" stroke-width="1"/><path d="M.2 .2L12.2 13.8" stroke="#d03010" stroke-width="1.8"/></svg>
<svg style="left:152.40px;top:541.20px" width="14.00" height="14.00" viewBox="0 0 14 14" preserveAspectRatio="none" ><path d="M1 5.6C1 4 2.4 3 5 3.4L12.6 3.6C13.6 4.6 13.4 5.8 12.4 6H8.4C9.6 7.4 9.4 8.2 8.4 8.6C9 9.6 8.6 10.6 7.6 10.8C7.6 11.6 7 12 5.8 12H3C1.6 11.6 1 10 1 8.4Z" fill="#f0b020" stroke="#2a1a00" stroke-width=".9"/><path d="M.2 .2L13.6 13.8" stroke="#d03010" stroke-width="1.8"/></svg>
<svg style="left:15.00px;top:559.80px" width="13.60" height="14.80" viewBox="0 0 13.6 14.8" preserveAspectRatio="none" ><rect x="2.4" y=".5" width="9" height="9" fill="#f4f6fa" stroke="#7b8fb6" stroke-width=".8"/><rect x=".5" y="2.6" width="11.6" height="11.6" fill="#fff" stroke="#50689a" stroke-width="1"/><path d="M3 8.4H9.6" stroke="#1a2a6a" stroke-width="1.3"/></svg>
<svg style="left:17.30px;top:588.60px" width="6.80" height="6.20" viewBox="0 0 10 6" preserveAspectRatio="none" ><path d="M0 0H10L5 6Z" fill="#575757"/></svg>
<svg style="left:28.40px;top:584.60px" width="20.60" height="14.20" viewBox="0 0 20.6 14.2" preserveAspectRatio="none" ><path d="M.2 11.2H20.4" stroke="#7a2c10" stroke-width="1.8"/><path d="M3.4 12L2.2 14M17.2 12L18.4 14" stroke="#7a2c10" stroke-width="1.2"/><rect x="2.6" y="2.8" width="3.4" height="7.6" fill="#d8881c" stroke="#7a3c08" stroke-width=".5"/><rect x="2.6" y="1.2" width="3.4" height="2" fill="#a83a18"/><path d="M2.8 6H5.8" stroke="#f6d27a" stroke-width=".8"/><rect x="10.4" y="1.4" width="3" height="9" fill="#3456d8" stroke="#1c3490" stroke-width=".5"/><path d="M10.6 3.2H13.2M10.6 5H13.2" stroke="#f0e060" stroke-width=".8"/><rect x="13.8" y="1.8" width="3.6" height="8.6" fill="#3c9a58" stroke="#1a6a32" stroke-width=".5"/><path d="M14.4 3.8H16.8" stroke="#cfeed4" stroke-width=".8"/></svg>
<svg style="left:31.70px;top:607.50px" width="5.80" height="6.00" viewBox="0 0 6 10" preserveAspectRatio="none" ><path d="M0 0L6 5L0 10Z" fill="#575757"/></svg>
<svg style="left:31.70px;top:626.30px" width="5.80" height="6.00" viewBox="0 0 6 10" preserveAspectRatio="none" ><path d="M0 0L6 5L0 10Z" fill="#575757"/></svg>
<svg style="left:31.70px;top:645.50px" width="5.80" height="6.00" viewBox="0 0 6 10" preserveAspectRatio="none" ><path d="M0 0L6 5L0 10Z" fill="#575757"/></svg>
<svg style="left:43.20px;top:603.40px" width="11.60" height="14.60" viewBox="0 0 11.6 14.6" preserveAspectRatio="none" ><path d="M1.2 3.4L8.4 .5L10.8 1.6V11.4L3.6 14.2L1.2 13Z" fill="#d48418" stroke="#7c4206" stroke-width=".8" stroke-linejoin="round"/><path d="M1.4 3.4L8.4 .7L10.6 1.7L3.6 4.5Z" fill="#fbf7ee" stroke="#7c4206" stroke-width=".4"/><path d="M1.2 3.4L3.6 4.6V14.2" fill="none" stroke="#7c4206" stroke-width=".8"/><path d="M5 7L9.4 5.2M5 9.6L9.4 7.8" stroke="#ffe96a" stroke-width="1.3"/><path d="M1.4 12.4L3.4 13.4" stroke="#f6e6c0" stroke-width=".8"/></svg>
<svg style="left:43.90px;top:622.20px" width="11.60" height="14.60" viewBox="0 0 11.6 14.6" preserveAspectRatio="none" ><path d="M1.2 3.4L8.4 .5L10.8 1.6V11.4L3.6 14.2L1.2 13Z" fill="#e25844" stroke="#8a2016" stroke-width=".8" stroke-linejoin="round"/><path d="M1.4 3.4L8.4 .7L10.6 1.7L3.6 4.5Z" fill="#fbf7ee" stroke="#8a2016" stroke-width=".4"/><path d="M1.2 3.4L3.6 4.6V14.2" fill="none" stroke="#8a2016" stroke-width=".8"/><path d="M5 7L9.4 5.2M5 9.6L9.4 7.8" stroke="#ffe96a" stroke-width="1.3"/><path d="M1.4 12.4L3.4 13.4" stroke="#f6e6c0" stroke-width=".8"/></svg>
<svg style="left:43.20px;top:641.20px" width="11.60" height="14.60" viewBox="0 0 11.6 14.6" preserveAspectRatio="none" ><path d="M1.2 3.4L8.4 .5L10.8 1.6V11.4L3.6 14.2L1.2 13Z" fill="#4c9a54" stroke="#1e6228" stroke-width=".8" stroke-linejoin="round"/><path d="M1.4 3.4L8.4 .7L10.6 1.7L3.6 4.5Z" fill="#fbf7ee" stroke="#1e6228" stroke-width=".4"/><path d="M1.2 3.4L3.6 4.6V14.2" fill="none" stroke="#1e6228" stroke-width=".8"/><path d="M5 7L9.4 5.2M5 9.6L9.4 7.8" stroke="#ffe96a" stroke-width="1.3"/><path d="M1.4 12.4L3.4 13.4" stroke="#f6e6c0" stroke-width=".8"/></svg>
<svg style="left:57.30px;top:625.40px" width="7.20" height="7.20" viewBox="0 0 7.2 7.2" preserveAspectRatio="none" ><circle cx="3.6" cy="3.6" r="3.3" fill="#3a7ad8" stroke="#245aa8" stroke-width=".5"/><path d="M1.8 3.6L3.2 5L5.6 2.2" fill="none" stroke="#fff" stroke-width="1"/></svg>
<i style="left:192px;top:54.1px;width:1064.8px;height:20.9px;background:linear-gradient(90deg,#9b9b9b 0%,#a4a4a4 38%,#bababc 64%,#cecfd3 78%,#d8dade 88%,#dadce1 100%);border:1px solid #7a7a7a"></i>
<i style="left:193px;top:55.1px;width:1062.8px;height:1.1px;background:rgba(255,255,255,.42);"></i>
<i style="left:193px;top:56.2px;width:1.1px;height:17.799999999999997px;background:rgba(255,255,255,.42);"></i>
<span class="t" style="left:211.80px;top:58.00px;font-size:11.5px;color:#000;transform:scaleX(1.0585);">Listing: linux_sample1.elf</span>
<i style="left:193.5px;top:77.3px;width:132.5px;height:21.5px;background:#7b8dc2;"></i>
<i style="left:193.5px;top:76.6px;width:132.5px;height:0.9px;background:#eef0f6;"></i>
<i style="left:193.5px;top:77.4px;width:132.5px;height:1.3px;background:#a4b1db;"></i>
<i style="left:326px;top:77px;width:109px;height:19.5px;background:#dadce2;border-left:2px solid #4a526b;border-top:2px solid #f6f7f9"></i>
<i style="left:328px;top:79px;width:1.5px;height:17px;background:#f6f7f9;"></i>
<i style="left:435px;top:77px;width:432.5px;height:19.5px;background:#dadce2;border-left:2px solid #4a526b;border-top:2px solid #f6f7f9"></i>
<i style="left:437px;top:79px;width:1.5px;height:17px;background:#f6f7f9;"></i>
<i style="left:867.5px;top:77px;width:114.5px;height:19.5px;background:#dadce2;border-left:2px solid #4a526b;border-top:2px solid #f6f7f9"></i>
<i style="left:869.5px;top:79px;width:1.5px;height:17px;background:#f6f7f9;"></i>
<i style="left:982px;top:77px;width:2px;height:19.5px;background:#4a526b;"></i>
<i style="left:326px;top:95.5px;width:931px;height:1.2px;background:#f2f3f6;"></i>
<i style="left:192px;top:96.7px;width:1065px;height:2.1px;background:#7b8dc2;"></i>
<span class="t" style="left:208.10px;top:80.00px;font-size:11px;color:#fff;transform:scaleX(1.0508);-webkit-text-stroke:0;">*linux_sample1.elf</span>
<span class="t" style="left:340.10px;top:80.00px;font-size:11px;color:#000;transform:scaleX(1.0607);">*fuck_tencent</span>
<span class="t" style="left:448.60px;top:80.00px;font-size:11px;color:#000;transform:scaleX(1.0256);">*f6b9aa26608ca43dec89b71c13a240824ec1e69e835a05ac2c34f284eb824e9f</span>
<span class="t" style="left:880.80px;top:80.00px;font-size:11px;color:#000;transform:scaleX(1.0832);">*powercat.exe</span>
<i style="left:193.5px;top:98.8px;width:1063.5px;height:514px;background:#dadde2;"></i>
<i style="left:193.5px;top:100.3px;width:1063.5px;height:1px;background:#b4b6bc;"></i>
<i style="left:205.9px;top:101.3px;width:63.5px;height:510.3px;background:#fff;"></i>
<i style="left:269.4px;top:101.3px;width:4.6px;height:510.3px;background:#e2e4e9;"></i>
<i style="left:274px;top:101.3px;width:951.5px;height:509.4px;background:#fff;border-left:1px solid #9a9da6;border-top:1px solid #a9acb3;border-bottom:1px solid #a9acb3"></i>
<i style="left:274px;top:610.7px;width:983px;height:1px;background:#e4e6ea;"></i>
<i style="left:275.5px;top:423.8px;width:949.7px;height:29.8px;background:#eaf1fc;"></i>
<i style="left:1224px;top:101.3px;width:30px;height:508.6px;background:#d9dbe0;"></i>
<i style="left:190px;top:611.8px;width:1070px;height:2px;background:#7a7a7a;"></i>
<i style="left:190px;top:613.8px;width:1070px;height:3.8px;background:#c1c2c4;"></i>
<i style="left:190px;top:617.6px;width:1070px;height:1.4px;background:#fbfbfc;"></i>
<i style="left:192px;top:619px;width:1064.8px;height:21.5px;background:linear-gradient(90deg,#9b9b9b 0%,#a4a4a4 38%,#bababc 64%,#cecfd3 78%,#d8dade 88%,#dadce1 100%);border:1px solid #7a7a7a"></i>
<i style="left:193px;top:620px;width:1062.8px;height:1.1px;background:rgba(255,255,255,.42);"></i>
<i style="left:193px;top:621.1px;width:1.1px;height:18.4px;background:rgba(255,255,255,.42);"></i>
<span class="t" style="left:211.80px;top:623.80px;font-size:11.5px;color:#000;transform:scaleX(1.0345);">Console - Scripting</span>
<i style="left:194px;top:643px;width:1060.5px;height:13px;background:#fff;border:1px solid #9a9da4;border-bottom:none"></i>
<i style="left:1256px;top:98.8px;width:1px;height:513px;background:#9da0a7;"></i>
<i style="left:1257px;top:51px;width:3px;height:605px;background:#fff;"></i>
<svg style="left:195.80px;top:59.50px" width="11.20" height="10.20" viewBox="0 0 11.2 10.2" preserveAspectRatio="none" ><rect x="0" y="0" width="11.2" height="10.2" fill="#f6f6f6"/><rect x="10.2" y="0" width="1" height="10.2" fill="#222"/><rect x="0" y="9.4" width="11.2" height=".8" fill="#555"/><rect x="4.2" y=".4" width="6" height="9" fill="#fff"/><rect x="4.2" y="1.2" width="6" height="3.6" fill="#3a5ab0"/><rect x="5" y="2" width="3" height="1.2" fill="#a8c4f4"/><rect x="6" y=".3" width="4.2" height="1" fill="#8fd08a"/><rect x="4.2" y="6" width="6" height="2.4" fill="#b4e0b0"/><g fill="#000"><circle cx="1.8" cy="1.5" r=".8"/><circle cx="1.8" cy="3.9" r=".8"/><circle cx="1.8" cy="6.3" r=".8"/><circle cx="1.8" cy="8.7" r=".8"/></g></svg>
<svg style="left:1042.70px;top:57.20px" width="13.80" height="14.30" viewBox="0 0 13.8 14.3" preserveAspectRatio="none" ><g fill="#f7f7f9" stroke="#bfc1c6" stroke-width=".7" stroke-linejoin="round"><path d="M.4 .4H5.8L8.5 3V10.3H.4Z"/><path d="M5.8 .4V3H8.5" fill="none"/><path d="M5.9 3.9H11.2L13.8 6.5V14H5.9Z"/><path d="M11.2 3.9V6.5H13.8" fill="none"/></g></svg>
<svg style="left:1062.00px;top:57.00px" width="14.80" height="15.00" viewBox="0 0 14.8 15" preserveAspectRatio="none" ><rect x=".6" y="1.6" width="10" height="11.6" rx="1.2" fill="#d9a24e" stroke="#a87420" stroke-width=".9"/><rect x="3" y=".4" width="5.2" height="2.6" rx=".8" fill="#c8c8c8" stroke="#8a6a20" stroke-width=".6"/><path d="M6 4.8H12L14.4 7.2V14.6H6Z" fill="#dfe6fa" stroke="#5a8ee0" stroke-width=".9"/><path d="M7.4 8.4H12.4M7.4 10.4H12.4M7.4 12.4H12.4" stroke="#c2cef0" stroke-width=".7"/></svg>
<i style="left:1084.9px;top:57px;width:1px;height:15px;background:#b4b6bc;"></i>
<i style="left:1090.7px;top:55.2px;width:19.3px;height:18.6px;background:#cfd2d7;border-top:1.4px solid #7e8086;border-left:1.4px solid #7e8086;border-right:1.6px solid #fff;border-bottom:1.6px solid #fff"></i>
<svg style="left:1093.50px;top:58.00px" width="12.60" height="13.20" viewBox="0 0 12.6 13.2" preserveAspectRatio="none" ><rect x="5.2" y="7.4" width="7.2" height="5.6" fill="#f0d060"/><path d="M.6 .6V10L2.8 8L4.6 11.8L6.2 11L4.4 7.4H7.4Z" fill="#fff" stroke="#000" stroke-width="1" stroke-linejoin="round"/></svg>
<i style="left:1114.9px;top:57px;width:1px;height:15px;background:#b4b6bc;"></i>
<svg style="left:1123.30px;top:57.00px" width="13.80" height="15.00" viewBox="0 0 13.8 15" preserveAspectRatio="none" ><rect x=".5" y=".5" width="12.8" height="7.8" fill="#fff" stroke="#333" stroke-width="1"/><path d="M.5 3.2H13.3M.5 5.8H13.3M4.4 .5V3.2M9.4 3.2V5.8M3 5.8V8.3M10.4 5.8V8.3" stroke="#333" stroke-width=".9"/><rect x="5.4" y="3.8" width="4.6" height="1.6" fill="#f0c030"/><path d="M6.9 9.6V11.4H4.6L6.9 14.6L9.2 11.4H6.9" fill="#333" stroke="#333" stroke-width="1"/></svg>
<svg style="left:1143.00px;top:58.00px" width="14.00" height="12.80" viewBox="0 0 14 12.8" preserveAspectRatio="none" ><rect x=".4" y=".4" width="4.4" height="12" fill="#eef4fc" stroke="#6fa0e0" stroke-width=".8"/><rect x="9.2" y=".4" width="4.4" height="12" fill="#eef4fc" stroke="#6fa0e0" stroke-width=".8"/><path d="M1.2 2.4H4M1.2 5H4M1.2 10H4M10 2.4H12.8M10 7.4H12.8M10 10H12.8" stroke="#5cb85c" stroke-width=".8"/><path d="M3.4 8.4L5.4 9.4L10.4 4" fill="none" stroke="#3aa03a" stroke-width="1.6"/></svg>
<i style="left:1164.8px;top:57px;width:1px;height:15px;background:#b4b6bc;"></i>
<svg style="left:1173.20px;top:57.00px" width="14.80" height="13.80" viewBox="0 0 14.8 13.8" preserveAspectRatio="none" ><rect x="4.6" y=".4" width="5.4" height="3.6" rx=".6" fill="#555" stroke="#111" stroke-width=".7"/><rect x=".5" y="3.4" width="13.8" height="9.8" rx="1.4" fill="#3a3a3a" stroke="#0a0a0a" stroke-width=".9"/><rect x="1.4" y="4.4" width="12" height="2" fill="#666"/><circle cx="7.4" cy="9" r="3.4" fill="#1a1a1a" stroke="#888" stroke-width=".8"/><circle cx="7.4" cy="9" r="1.5" fill="#555"/><path d="M5.6 7.4L7 8.6" stroke="#ccc" stroke-width=".7"/></svg>
<i style="left:1196.0px;top:57px;width:1px;height:15px;background:#b4b6bc;"></i>
<svg style="left:1204.00px;top:57.00px" width="13.80" height="14.80" viewBox="0 0 13.8 14.8" preserveAspectRatio="none" ><rect x=".6" y=".6" width="9" height="13.6" fill="#fff" stroke="#333" stroke-width=".9" stroke-dasharray="1.4 1"/><path d="M2 3H8M2 5H8" stroke="#bbb" stroke-width=".8"/><rect x="2" y="7.4" width="6" height="4" fill="#7a9ad0"/><rect x="2" y="9.6" width="6" height="1.8" fill="#b8c8e4"/><rect x="9.6" y=".4" width="3.8" height="14" rx=".8" fill="#f0b840" stroke="#d08818" stroke-width=".8"/><path d="M10.2 2.4H11.6M10.2 4.4H12.2M10.2 6.4H11.6M10.2 8.4H12.2M10.2 10.4H11.6M10.2 12.4H12.2" stroke="#fff4d0" stroke-width=".7"/></svg>
<svg style="left:1223.80px;top:62.80px" width="5.40" height="2.60" viewBox="0 0 10 6" preserveAspectRatio="none" ><path d="M0 0H10L5 6Z" fill="#000"/></svg>
<i style="left:1233.7px;top:57px;width:1px;height:15px;background:#b4b6bc;"></i>
<svg style="left:1239.70px;top:60.40px" width="9.40" height="9.00" viewBox="0 0 10 10" preserveAspectRatio="none" ><path d="M1 1L9 9M9 1L1 9" stroke="#000" stroke-width="2.3" stroke-linecap="round" fill="none"/></svg>
<svg style="left:314.00px;top:81.00px" width="8.60" height="9.40" viewBox="0 0 8.6 9.4" preserveAspectRatio="none" ><path d="M1.4 1.4L7.2 8M7.2 1.4L1.4 8" stroke="#2a2a2a" stroke-width="3.4" stroke-linecap="round"/><path d="M1.4 1.4L7.2 8M7.2 1.4L1.4 8" stroke="#fff" stroke-width="2" stroke-linecap="round"/></svg>
<div style="position:absolute;left:1225.2px;top:101.6px;width:13.7px;height:508.3px;overflow:hidden;background:linear-gradient(90deg,#a7a9af,#c2c4c9 30%,#d7d9de 80%)">
<i style="left:0;top:14px;width:13.7px;height:12px;background:linear-gradient(#555 0%,#9a9ca2 70%,#b6b8bd)"></i>
<i style="left:-14px;top:22.5px;width:27.2px;height:27px;border-radius:50%;border:1px solid #2c3c5c;background:linear-gradient(90deg,#c0d4ea 52%,#b4cae4 60%,#dbe6f3 85%,#e6eef8)"></i>
<svg style="left:0;top:0" width="13.7" height="24" viewBox="0 0 13.7 24"><path d="M0 0H13.7V23.5C12 17 6 14.4 0 14.2Z" fill="#e8eaee"/><path d="M0 0H2V14.2H0Z" fill="#f2f3f6"/></svg>
<svg style="left:0;top:484.3px" width="13.7" height="24" viewBox="0 0 13.7 24"><path d="M0 24H13.7V.5C12 7 6 9.6 0 9.8Z" fill="#e8eaee"/><path d="M0 24H2V9.8H0Z" fill="#f2f3f6"/><path d="M0 5C5 5 10 7 13.7 .5C12 7 6 9.6 0 9.8Z" fill="#777"/></svg>
</div>
<svg style="left:1229.10px;top:107.20px" width="5.90" height="5.50" viewBox="0 0 5.9 5.5" preserveAspectRatio="none" ><path d="M2.95 0L5.9 5.5H0Z" fill="#3a3a3a"/></svg>
<svg style="left:1228.80px;top:598.80px" width="6.40" height="6.00" viewBox="0 0 6.4 6" preserveAspectRatio="none" ><path d="M0 0H6.4L3.2 6Z" fill="#3a3a3a"/></svg>
<i style="left:1253.3px;top:101.3px;width:1px;height:509px;background:#a4a7ae;"></i>
<i style="left:1239.3px;top:131.6px;width:9px;height:3.2px;background:#c4c6cb;border:.8px solid #f4f5f8"></i>
<i style="left:1245px;top:137.3px;width:8.2px;height:107.19999999999999px;background:#404040;"></i>
<i style="left:1245px;top:248.1px;width:8.2px;height:3.9000000000000057px;background:#404040;"></i>
<i style="left:1245px;top:259.9px;width:8.2px;height:6.800000000000011px;background:#404040;"></i>
<i style="left:1245px;top:269px;width:8.2px;height:6.800000000000011px;background:#404040;"></i>
<i style="left:1245px;top:533.3px;width:8.2px;height:45.30000000000007px;background:#404040;"></i>
<i style="left:1239px;top:139.7px;width:9.2px;height:6.200000000000017px;background:#d9b47c;border:1px solid #f09420"></i>
<i style="left:1239px;top:172.1px;width:9.2px;height:3.9000000000000057px;background:#d9b47c;border:1px solid #f09420"></i>
<i style="left:1239px;top:187px;width:9.2px;height:3px;background:#d9b47c;border:1px solid #f09420"></i>
<i style="left:1239px;top:189.9px;width:9.2px;height:3.0px;background:#d9b47c;border:1px solid #f09420"></i>
<i style="left:1239px;top:199.2px;width:9.2px;height:3.5px;background:#d9b47c;border:1px solid #f09420"></i>
<i style="left:1239px;top:232.6px;width:9.2px;height:4.200000000000017px;background:#d9b47c;border:1px solid #f09420"></i>
<i style="left:1239px;top:578px;width:9.2px;height:4.899999999999977px;background:#d9b47c;border:1px solid #f09420"></i>
<svg style="left:195.80px;top:624.00px" width="11.00" height="11.80" viewBox="0 0 11 11.8" preserveAspectRatio="none" ><rect x=".5" y=".5" width="10" height="7.4" rx=".6" fill="#6b9be6" stroke="#c8d4e8" stroke-width="1"/><rect x="1.8" y="1.8" width="7.4" height="4.6" fill="#7fb0f4"/><path d="M4 8.6H7L7.6 10.2H3.4Z" fill="#d8d8d8"/><path d="M2.2 11H8.8" stroke="#e4e4e4" stroke-width="1.2"/></svg>
<svg style="left:1196.70px;top:622.60px" width="13.80" height="15.00" viewBox="0 0 13.8 15" preserveAspectRatio="none" ><path d="M3 7.4V4.6C3 2.2 4.6 .8 6.9 .8C9.2 .8 10.8 2.2 10.8 4.6V7.4" fill="none" stroke="#b8b8b8" stroke-width="1.8"/><rect x=".6" y="6.8" width="12.6" height="7.6" rx=".8" fill="#f0c040" stroke="#c8961a" stroke-width=".9"/><path d="M2.4 9.2H11.4M2.4 11.6H11.4" stroke="#fbe48a" stroke-width="1"/><rect x="5.6" y="9" width="2.6" height="3.2" fill="#f8e090"/></svg>
<svg style="left:1216.90px;top:622.60px" width="14.30" height="15.00" viewBox="0 0 14.3 15" preserveAspectRatio="none" ><path d="M8.6 .6L13.8 2.4L7.4 12.6L2.2 10.8Z" fill="#f0c030" stroke="#c89010" stroke-width=".7"/><path d="M10 1.2L12.4 2L6.2 12L3.8 11.2Z" fill="#3a3a3a"/><path d="M2.2 10.8L7.4 12.6L5.6 14.6L1 13.6Z" fill="#f0a8a0" stroke="#d88078" stroke-width=".5"/><path d="M5 14.8H12" stroke="#c8c8c8" stroke-width=".6" stroke-dasharray="1 1"/></svg>
<i style="left:1233.8px;top:623.5px;width:1px;height:14px;background:#b4b6bc;"></i>
<svg style="left:1239.60px;top:626.20px" width="9.80" height="9.00" viewBox="0 0 10 10" preserveAspectRatio="none" ><path d="M1 1L9 9M9 1L1 9" stroke="#000" stroke-width="2.3" stroke-linecap="round" fill="none"/></svg>
<svg style="left:193.30px;top:426.30px" width="12.60" height="6.40" viewBox="0 0 12.6 6.4" preserveAspectRatio="none" ><path d="M0 3.2H11" stroke="#000" stroke-width="1"/><path d="M8.4 .6L12.4 3.2L8.4 5.8Z" fill="#000"/></svg>
<i style="left:270.8px;top:345px;width:2px;height:14px;background:#aeb1b8;"></i>
<i style="left:565px;top:424px;width:1.8px;height:14.6px;background:#f09c9c;"></i>
<div style="position:absolute;left:275.5px;top:102.3px;width:948px;height:507.7px;overflow:hidden">
<span class="m b" style="top:-6.92px;left:106.7px">73 74 72 00</span>
<span class="m a" style="top:7.40px;left:50.8px">00100d89</span>
<span class="m b" style="top:7.40px;left:106.7px">72 65 6e</span>
<span class="m d" style="top:7.40px;left:205.5px">ds</span>
<span class="m s" style="top:7.40px;left:277.5px">"rename"</span>
<span class="m b" style="top:21.72px;left:106.7px">61 6d 65 00</span>
<span class="m a" style="top:36.05px;left:50.8px">00100d90</span>
<span class="m b" style="top:36.05px;left:106.7px">73 79 73</span>
<span class="m d" style="top:36.05px;left:205.5px">ds</span>
<span class="m s" style="top:36.05px;left:277.5px">"sysinfo"</span>
<span class="m b" style="top:50.37px;left:106.7px">69 6e 66</span>
<span class="m b" style="top:64.70px;left:106.7px">6f 00</span>
<span class="m a" style="top:79.02px;left:50.8px">00100d98</span>
<span class="m b" style="top:79.02px;left:106.7px">61 73 70</span>
<span class="m d" style="top:79.02px;left:205.5px">ds</span>
<span class="m s" style="top:79.02px;left:277.5px">"asprintf"</span>
<span class="m b" style="top:93.34px;left:106.7px">72 69 6e</span>
<span class="m b" style="top:107.67px;left:106.7px">74 66 00</span>
<span class="m a" style="top:121.99px;left:50.8px">00100da1</span>
<span class="m b" style="top:121.99px;left:106.7px">73 65 74</span>
<span class="m d" style="top:121.99px;left:205.5px">ds</span>
<span class="m s" style="top:121.99px;left:277.5px">"setutxent"</span>
<span class="m b" style="top:136.32px;left:106.7px">75 74 78</span>
<span class="m b" style="top:150.64px;left:106.7px">65 6e 74 00</span>
<span class="m a" style="top:164.96px;left:50.8px">00100dab</span>
<span class="m b" style="top:164.96px;left:106.7px">67 65 74</span>
<span class="m d" style="top:164.96px;left:205.5px">ds</span>
<span class="m s" style="top:164.96px;left:277.5px">"getutxent"</span>
<span class="m b" style="top:179.29px;left:106.7px">75 74 78</span>
<span class="m b" style="top:193.61px;left:106.7px">65 6e 74 00</span>
<span class="m a" style="top:207.94px;left:50.8px">00100db5</span>
<span class="m b" style="top:207.94px;left:106.7px">65 6e 64</span>
<span class="m d" style="top:207.94px;left:205.5px">ds</span>
<span class="m s" style="top:207.94px;left:277.5px">"endutxent"</span>
<span class="m b" style="top:222.26px;left:106.7px">75 74 78</span>
<span class="m b" style="top:236.58px;left:106.7px">65 6e 74 00</span>
<span class="m a" style="top:250.91px;left:50.8px">00100dbf</span>
<span class="m b" style="top:250.91px;left:106.7px">73 79 73</span>
<span class="m d" style="top:250.91px;left:205.5px">ds</span>
<span class="m s" style="top:250.91px;left:277.5px">"sysconf"</span>
<span class="m b" style="top:265.23px;left:106.7px">63 6f 6e</span>
<span class="m b" style="top:279.56px;left:106.7px">66 00</span>
<span class="m a" style="top:293.88px;left:50.8px">00100dc7</span>
<span class="m b" style="top:293.88px;left:106.7px">73 73 63</span>
<span class="m d" style="top:293.88px;left:205.5px">ds</span>
<span class="m s" style="top:293.88px;left:277.5px">"sscanf"</span>
<span class="m b" style="top:308.20px;left:106.7px">61 6e 66 00</span>
<span class="m a" style="top:322.53px;left:50.8px">00100dce</span>
<span class="m b" style="top:322.53px;left:106.7px">6b 69 6c</span>
<span class="m d" style="top:322.53px;left:205.5px">ds</span>
<span class="m s" style="top:322.53px;left:277.5px">"kill"</span>
<span class="m b" style="top:336.85px;left:106.7px">6c 00</span>
<span class="m a" style="top:351.18px;left:50.8px">00100dd3</span>
<span class="m b" style="top:351.18px;left:106.7px">69 6e 65</span>
<span class="m d" style="top:351.18px;left:205.5px">ds</span>
<span class="m s" style="top:351.18px;left:277.5px">"inet_ntoa"</span>
<span class="m b" style="top:365.50px;left:106.7px">74 5f 6e</span>
<span class="m b" style="top:379.82px;left:106.7px">74 6f 61 00</span>
<span class="m a" style="top:394.15px;left:50.8px">00100ddd</span>
<span class="m b" style="top:394.15px;left:106.7px">6c 64 69</span>
<span class="m d" style="top:394.15px;left:205.5px">ds</span>
<span class="m s" style="top:394.15px;left:277.5px">"ldiv"</span>
<span class="m b" style="top:408.47px;left:106.7px">76 00</span>
<span class="m a" style="top:422.80px;left:50.8px">00100de2</span>
<span class="m b" style="top:422.80px;left:106.7px">73 74 72</span>
<span class="m d" style="top:422.80px;left:205.5px">ds</span>
<span class="m s" style="top:422.80px;left:277.5px">"strtol"</span>
<span class="m b" style="top:437.12px;left:106.7px">74 6f 6c 00</span>
<span class="m a" style="top:451.44px;left:50.8px">00100de9</span>
<span class="m b" style="top:451.44px;left:106.7px">73 74 72</span>
<span class="m d" style="top:451.44px;left:205.5px">ds</span>
<span class="m s" style="top:451.44px;left:277.5px">"strrchr"</span>
<span class="m b" style="top:465.77px;left:106.7px">72 63 68</span>
<span class="m b" style="top:480.09px;left:106.7px">72 00</span>
<span class="m a" style="top:494.42px;left:50.8px">00100df1</span>
<span class="m b" style="top:494.42px;left:106.7px">75 6d 61</span>
<span class="m d" style="top:494.42px;left:205.5px">ds</span>
<span class="m s" style="top:494.42px;left:277.5px">"umask"</span>
</div>
</body></html>
